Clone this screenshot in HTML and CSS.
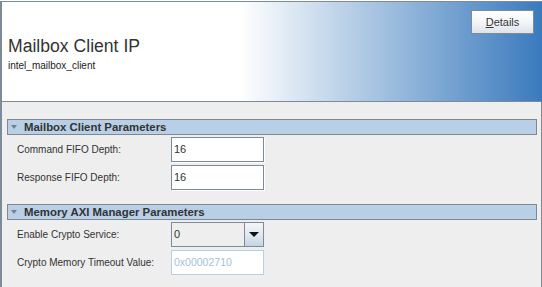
FILE: index.html
```html
<!DOCTYPE html>
<html>
<head>
<meta charset="utf-8">
<link rel="stylesheet" href="styles.css">
</head>
<body>
<div class="frame">
  <div class="header">
    <div class="titles">
      <div class="title">Mailbox Client IP</div>
      <div class="subtitle">intel_mailbox_client</div>
    </div>
    <button class="details"><u>D</u>etails</button>
  </div>
  <div class="content">
    <div class="section">
      <div class="bar"><span class="tri"></span>Mailbox Client Parameters</div>
      <div class="rows">
        <div class="row"><span class="label">Command FIFO Depth:</span><span class="field">16</span></div>
        <div class="row"><span class="label">Response FIFO Depth:</span><span class="field">16</span></div>
      </div>
    </div>
    <div class="section">
      <div class="bar"><span class="tri"></span>Memory AXI Manager Parameters</div>
      <div class="rows">
        <div class="row"><span class="label">Enable Crypto Service:</span><span class="combo"><span class="combo-val">0</span><span class="combo-btn"><span class="arrow"></span></span></span></div>
        <div class="row"><span class="label">Crypto Memory Timeout Value:</span><span class="field disabled">0x00002710</span></div>
      </div>
    </div>
  </div>
</div>
</body>
</html>
```
FILE: styles.css
```css
html, body {
  margin: 0;
  padding: 0;
  background: #ffffff;
}
body {
  padding-top: 1px;
  font-family: "Liberation Sans", Arial, sans-serif;
  color: #333333;
}
.frame {
  width: 542px;
  height: 286px;
  box-sizing: border-box;
  border-left: 2px solid #7d8b98;
  display: flex;
  flex-direction: column;
}
.header {
  height: 101px;
  box-sizing: border-box;
  border-top: 1px solid #7d8b98;
  border-bottom: 1px solid #7d8b98;
  background: linear-gradient(to right, #ffffff 0%, #ffffff 44%, #3a7abd 100%);
  display: flex;
  justify-content: space-between;
  align-items: flex-start;
}
.titles {
  padding-left: 6px;
  padding-top: 34px;
}
.title {
  font-size: 17.6px;
  line-height: 20px;
  color: #333;
}
.subtitle {
  margin-top: 3px;
  font-size: 10px;
  line-height: 13px;
  color: #222;
}
.details {
  margin-top: 8px;
  margin-right: 8px;
  width: 63px;
  height: 24px;
  border: 1px solid #7d8b98;
  background: linear-gradient(to bottom, #ffffff 0%, #f4f6f9 50%, #dde3ea 100%);
  font-family: "Liberation Sans", Arial, sans-serif;
  font-size: 11px;
  color: #333;
  padding: 0;
}
.details u {
  text-decoration: underline;
}
.content {
  flex: 1;
  background: #eeeeee;
  border-right: 1px solid #7d8b98;
  padding: 17px 4px 0 5px;
  display: flex;
  flex-direction: column;
  gap: 14px;
}
.bar {
  height: 16px;
  box-sizing: border-box;
  border: 1px solid #7f8790;
  background: #b8cfe5;
  font-weight: bold;
  font-size: 11.4px;
  line-height: 14px;
  color: #333;
  display: flex;
  align-items: center;
  padding-left: 2px;
}
.tri {
  width: 0;
  height: 0;
  border-left: 3px solid transparent;
  border-right: 3px solid transparent;
  border-top: 4px solid #7a7f86;
  margin-right: 7px;
  margin-left: 1px;
}
.rows {
  padding-top: 2px;
  padding-left: 10px;
  display: flex;
  flex-direction: column;
  gap: 3px;
}
.row {
  display: flex;
  align-items: center;
  height: 25px;
  font-size: 10px;
}
.label {
  width: 154px;
}
.field {
  width: 93px;
  height: 25px;
  box-sizing: border-box;
  background: #ffffff;
  border: 1px solid #7d8b98;
  box-shadow: 1px 1px 0 #ffffff;
  padding-left: 2px;
  line-height: 23px;
  font-size: 11px;
  color: #333;
}
.field.disabled {
  border-color: #b8cfe5;
  box-shadow: none;
  font-size: 10.5px;
  color: #a3bfdb;
}
.combo {
  display: flex;
  width: 93px;
  height: 25px;
  box-sizing: border-box;
}
.combo-val {
  flex: 1;
  box-sizing: border-box;
  border: 1px solid #7d8b98;
  background: #eeeeee;
  padding-left: 2px;
  line-height: 23px;
  font-size: 11px;
}
.combo-btn {
  width: 19px;
  box-sizing: border-box;
  border: 1px solid #7d8b98;
  border-left: none;
  background: linear-gradient(to bottom, #f4f6f9 0%, #dde5ee 60%, #c6d3e0 100%);
  display: flex;
  align-items: center;
  justify-content: center;
}
.arrow {
  width: 0;
  height: 0;
  border-left: 5px solid transparent;
  border-right: 5px solid transparent;
  border-top: 5px solid #111;
}
```
